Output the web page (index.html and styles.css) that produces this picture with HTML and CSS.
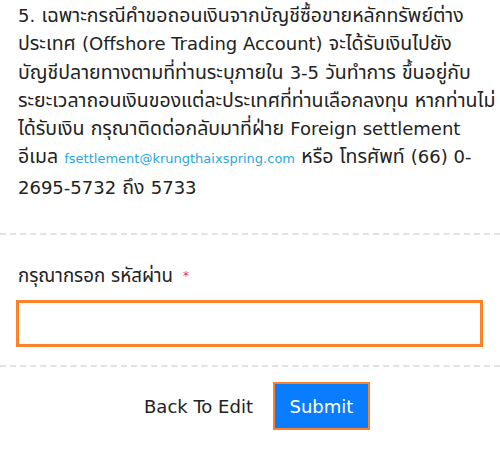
FILE: index.html
```html
<!DOCTYPE html>
<html lang="th">
<head>
<meta charset="utf-8">
<link rel="stylesheet" href="styles.css">
</head>
<body>
<div class="page">
  <section class="notice">
    <p><span class="en">5.</span> เฉพาะกรณีคำขอถอนเงินจากบัญชีซื้อขายหลักทรัพย์ต่าง<br>ประเทศ <span class="en">(Offshore Trading Account)</span> จะได้รับเงินไปยัง<br>บัญชีปลายทางตามที่ท่านระบุภายใน <span class="en">3-5</span> วันทำการ ขึ้นอยู่กับ<br>ระยะเวลาถอนเงินของแต่ละประเทศที่ท่านเลือกลงทุน หากท่านไม่<br>ได้รับเงิน กรุณาติดต่อกลับมาที่ฝ่าย <span class="en">Foreign settlement</span><br>อีเมล <a class="mail">fsettlement@krungthaixspring.com</a> หรือ โทรศัพท์ <span class="en">(66) 0-</span><br><span class="en">2695-5732</span> ถึง <span class="en">5733</span></p>
  </section>
  <section class="field">
    <label class="label">กรุณากรอก รหัสผ่าน <span class="req">*</span></label>
    <input class="input" type="password">
  </section>
  <section class="actions">
    <button class="btn-link">Back To Edit</button>
    <button class="btn-primary">Submit</button>
  </section>
</div>
</body>
</html>
```

FILE: styles.css
```css
html, body {
  margin: 0;
  padding: 0;
  background: #fff;
}
.page {
  font-family: "DejaVu Sans", "Noto Sans Thai", "Noto Sans", sans-serif;
  color: #222;
  width: 500px;
}
.notice {
  padding: 2px 10px 31px 18px;
  border-bottom: 2px dashed #e2e2e2;
}
.notice p {
  margin: 0;
  font-size: 19.5px;
  line-height: 28.3px;
  white-space: nowrap;
}
.en {
  font-size: 18px;
}
.mail {
  color: #2aa6e0;
  font-size: 13px;
  text-decoration: none;
}
.field {
  padding: 29px 17px 18px 16px;
  border-bottom: 2px dashed #e2e2e2;
  display: flex;
  flex-direction: column;
}
.label {
  font-size: 18.7px;
  line-height: 24px;
  padding-left: 2px;
  margin-bottom: 12px;
}
.req {
  color: #e53935;
  font-size: 12px;
  vertical-align: top;
  margin-left: 4px;
}
.input {
  box-sizing: border-box;
  height: 47px;
  width: 100%;
  border: 3px solid #fb8228;
  outline: none;
  margin: 0;
}
.actions {
  display: flex;
  justify-content: center;
  align-items: center;
  gap: 20px;
  padding-top: 15px;
  padding-left: 14px;
}
.btn-link {
  background: none;
  border: none;
  font-family: inherit;
  font-size: 18px;
  color: #222;
  padding: 0;
}
.btn-primary {
  background: #0a7cff;
  color: #fff;
  border: 2px solid #fb8228;
  font-family: inherit;
  font-size: 18px;
  width: 97px;
  height: 48px;
  padding: 0;
}
```
